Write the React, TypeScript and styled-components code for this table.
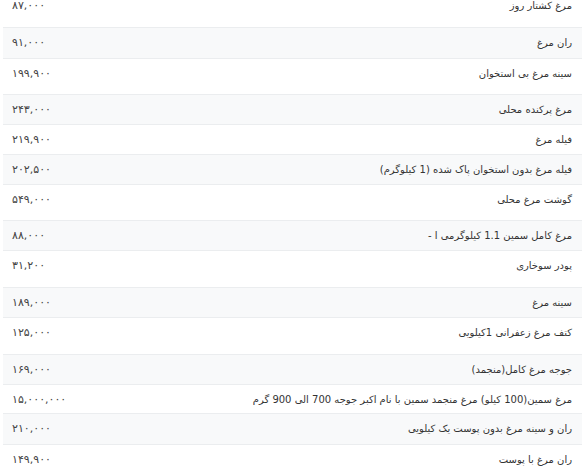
import React from "react";
import styled, { createGlobalStyle } from "styled-components";

const GlobalStyle = createGlobalStyle`
  html, body {
    margin: 0;
    padding: 0;
    background: #ffffff;
    overflow: hidden;
  }
  body {
    font-family: "DejaVu Sans", "Noto Sans", sans-serif;
    color: #333;
  }
`;

const Table = styled.div`
  margin: -10px 3px 0 3px;
  display: flex;
  flex-direction: column;
`;

const Row = styled.div<{ $striped: boolean; $h: number }>`
  direction: rtl;
  display: flex;
  justify-content: space-between;
  align-items: flex-start;
  box-sizing: border-box;
  height: ${(p) => p.$h}px;
  padding: 6px 10px 0 9px;
  border-top: 1px solid #ebedef;
  background: ${(p) => (p.$striped ? "#f8f9fa" : "#ffffff")};
`;

const Name = styled.span`
  font-size: 10px;
  line-height: 18px;
  color: #333;
  white-space: nowrap;
`;

const Price = styled.span`
  font-size: 11px;
  line-height: 18px;
  color: #444;
  direction: ltr;
  white-space: nowrap;
`;

type Item = { name: string; price: string; h: number };

const items: Item[] = [
  { name: "مرغ کشتار روز", price: "۸۷,۰۰۰", h: 37 },
  { name: "ران مرغ", price: "۹۱,۰۰۰", h: 30.5 },
  { name: "سینه مرغ بی استخوان", price: "۱۹۹,۹۰۰", h: 36.5 },
  { name: "مرغ پرکنده محلی", price: "۲۴۳,۰۰۰", h: 30 },
  { name: "فیله مرغ", price: "۲۱۹,۹۰۰", h: 29.5 },
  { name: "فیله مرغ بدون استخوان پاک شده (1 کیلوگرم)", price: "۲۰۲,۵۰۰", h: 30 },
  { name: "گوشت مرغ محلی", price: "۵۴۹,۰۰۰", h: 36.5 },
  { name: "مرغ کامل سمین 1.1 کیلوگرمی ا -", price: "۸۸,۰۰۰", h: 30 },
  { name: "پودر سوخاری", price: "۳۱,۲۰۰", h: 36.5 },
  { name: "سینه مرغ", price: "۱۸۹,۰۰۰", h: 30.5 },
  { name: "کتف مرغ زعفرانی 1کیلویی", price: "۱۲۵,۰۰۰", h: 36.5 },
  { name: "جوجه مرغ کامل(منجمد)", price: "۱۶۹,۰۰۰", h: 30 },
  { name: "مرغ سمین(100 کیلو) مرغ منجمد سمین با نام اکبر جوجه 700 الی 900 گرم", price: "۱۵,۰۰۰,۰۰۰", h: 29.5 },
  { name: "ران و سینه مرغ بدون پوست یک کیلویی", price: "۲۱۰,۰۰۰", h: 30.5 },
  { name: "ران مرغ با پوست", price: "۱۴۹,۹۰۰", h: 36.5 },
];

export default function App() {
  return (
    <>
      <GlobalStyle />
      <Table>
        {items.map((it, i) => (
          <Row key={i} $striped={i % 2 === 1} $h={it.h}>
            <Name>{it.name}</Name>
            <Price>{it.price}</Price>
          </Row>
        ))}
      </Table>
    </>
  );
}
